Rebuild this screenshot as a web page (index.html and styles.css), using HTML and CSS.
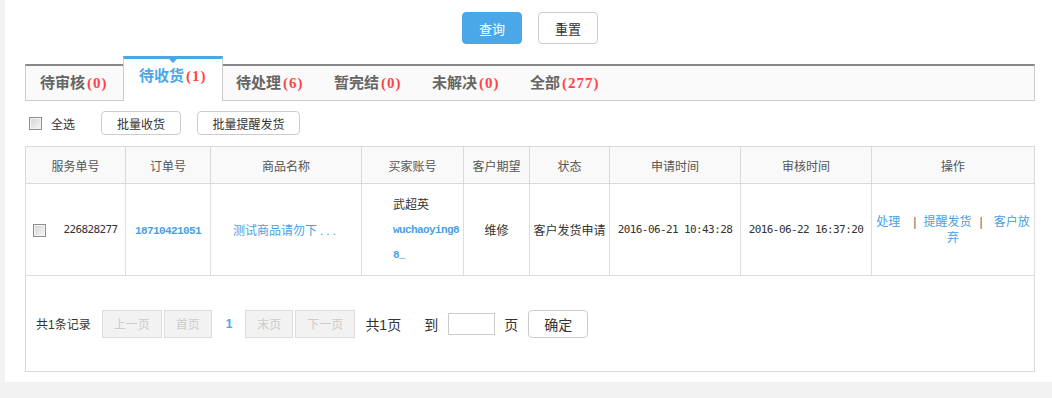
FILE: index.html
```html
<!DOCTYPE html>
<html lang="zh-CN">
<head>
    <meta charset="utf-8">
    <title>售后服务单</title>
    <link rel="stylesheet" href="styles.css">
</head>
<body>
    <div class="page">
        <div class="search-btns">
            <button class="btn btn-lg btn-primary">查询</button>
            <button class="btn btn-lg">重置</button>
        </div>

        <div class="tabs">
            <a class="tab" href="#">待审核<em>(0)</em></a>
            <a class="tab active" href="#">待收货<em>(1)</em></a>
            <a class="tab" href="#">待处理<em>(6)</em></a>
            <a class="tab" href="#">暂完结<em>(0)</em></a>
            <a class="tab" href="#">未解决<em>(0)</em></a>
            <a class="tab" href="#">全部<em>(277)</em></a>
        </div>

        <div class="toolbar">
            <label class="check-all"><input type="checkbox" class="cb">全选</label>
            <button class="btn btn-sm btn-w80">批量收货</button>
            <button class="btn btn-sm btn-w103">批量提醒发货</button>
        </div>

        <table class="list">
            <colgroup>
                <col class="c-service">
                <col class="c-order">
                <col class="c-goods">
                <col class="c-buyer">
                <col class="c-expect">
                <col class="c-state">
                <col class="c-time">
                <col class="c-time">
                <col>
            </colgroup>
            <thead>
                <tr>
                    <th>服务单号</th>
                    <th>订单号</th>
                    <th>商品名称</th>
                    <th>买家账号</th>
                    <th>客户期望</th>
                    <th>状态</th>
                    <th>申请时间</th>
                    <th>审核时间</th>
                    <th>操作</th>
                </tr>
            </thead>
            <tbody>
                <tr>
                    <td><input type="checkbox" class="cb row-cb"><span class="num">226828277</span></td>
                    <td><a class="code" href="#">18710421051</a></td>
                    <td><a class="link" href="#">测试商品请勿下<span class="dots">...</span></a></td>
                    <td class="buyer">武超英<br><a class="code" href="#">wuchaoying88_</a></td>
                    <td>维修</td>
                    <td>客户发货申请</td>
                    <td><span class="num">2016-06-21 10:43:28</span></td>
                    <td><span class="num">2016-06-22 16:37:20</span></td>
                    <td class="ops"><a class="link" href="#">处理</a><span class="sep sep-1">|</span><a class="link" href="#">提醒发货</a><span class="sep sep-2">|</span><a class="link" href="#">客户放弃</a></td>
                </tr>
            </tbody>
        </table>

        <div class="pager">
            <span class="total">共1条记录</span>
            <button class="pg-btn pg-wide">上一页</button>
            <button class="pg-btn">首页</button>
            <span class="cur">1</span>
            <button class="pg-btn">末页</button>
            <button class="pg-btn pg-wide">下一页</button>
            <span class="pages">共1页</span>
            <span class="goto">到</span>
            <input type="text" class="page-input">
            <span class="unit">页</span>
            <button class="btn btn-ok">确定</button>
        </div>
    </div>
</body>
</html>
```

FILE: styles.css
```css
body {
    margin: 0;
    background: #f2f2f2;
    font-family: "Liberation Sans", "Noto Sans CJK SC", sans-serif;
    font-size: 12px;
    color: #333;
}
a {
    text-decoration: none;
}
.page {
    margin-left: 5px;
    height: 382px;
    padding: 12px 17px 0 20px;
    box-sizing: border-box;
    background: #fff;
}

/* buttons */
.btn {
    box-sizing: border-box;
    padding: 0;
    border: 1px solid #ccc;
    border-radius: 4px;
    background: #fff;
    color: #333;
    font-family: inherit;
    cursor: pointer;
}
.btn-lg {
    width: 60px;
    height: 32px;
    font-size: 13px;
}
.btn-primary {
    border-color: #4aa8e8;
    background: #4aa8e8;
    color: #fff;
}
.btn-sm {
    height: 24px;
    font-size: 12px;
    margin-right: 16px;
}
.btn-w80 {
    width: 80px;
}
.btn-w103 {
    width: 103px;
}
.search-btns {
    display: flex;
    justify-content: center;
    gap: 16px;
}

/* tabs */
.tabs {
    display: flex;
    height: 34px;
    margin-top: 20px;
    border: 1px solid #ccc;
    border-top: 2px solid #888;
    background: #fafafa;
}
.tab {
    width: 98px;
    box-sizing: border-box;
    padding-left: 14px;
    line-height: 34px;
    font-size: 15px;
    font-weight: bold;
    color: #666;
    white-space: nowrap;
}
.tab em {
    margin-left: 2px;
    font-family: "Liberation Serif", serif;
    font-style: normal;
    letter-spacing: 1px;
    color: #f44;
}
.tab.active {
    position: relative;
    width: 100px;
    height: 45px;
    margin: -10px -1px 0;
    padding-left: 15px;
    border: 1px solid #ccc;
    border-top: 3px solid #4aa8e8;
    border-bottom: 0;
    background: #fff;
    line-height: 33px;
    color: #4aa8e8;
}
.tab.active::after {
    content: "";
    position: absolute;
    top: 0;
    left: 50%;
    margin-left: -4px;
    border: 4px solid transparent;
    border-top-color: #4aa8e8;
}

/* toolbar */
.toolbar {
    display: flex;
    align-items: center;
    height: 24px;
    margin-top: 10px;
}
.check-all {
    display: flex;
    align-items: center;
    margin: 0 26px 0 4px;
    font-size: 12px;
}
.cb {
    appearance: none;
    width: 13px;
    height: 13px;
    margin: 0 9px 0 0;
    border: 1px solid #8f8f8f;
    background: linear-gradient(135deg, #d4d4d4, #f6f6f6);
    box-shadow: inset 0 0 0 1px #f2f2f2;
    vertical-align: middle;
}

/* table */
.list {
    width: 100%;
    margin-top: 11px;
    border-collapse: collapse;
    table-layout: fixed;
}
.c-service {
    width: 100px;
}
.c-order {
    width: 85px;
}
.c-goods {
    width: 151px;
}
.c-buyer {
    width: 102px;
}
.c-expect {
    width: 66px;
}
.c-state {
    width: 80px;
}
.c-time {
    width: 131px;
}
.list th {
    height: 36px;
    padding: 0;
    border: 1px solid #d9d9d9;
    background: #f9f9f9;
    font-weight: normal;
    color: #555;
}
.list td {
    height: 91px;
    padding: 0;
    border: 1px solid #ddd;
    text-align: center;
}
.row-cb {
    margin-right: 17px;
}
.num {
    font-family: "DejaVu Sans Mono", monospace;
    font-size: 11px;
    letter-spacing: -0.6px;
    vertical-align: middle;
}
.code {
    font-family: "Liberation Mono", monospace;
    font-size: 11px;
    font-weight: bold;
    letter-spacing: -0.6px;
    color: #4a9fe3;
}
.link {
    color: #4a9fe3;
}
.dots {
    margin-left: 3px;
    letter-spacing: 3px;
}
.list td.buyer {
    padding: 0 3px 0 31px;
    text-align: left;
    line-height: 24px;
    word-break: break-all;
}
.list td.ops {
    padding: 0 1px;
    line-height: 16px;
}
.sep {
    color: #666;
}
.sep-1 {
    margin: 0 7px 0 13px;
}
.sep-2 {
    margin: 0 11px 0 8px;
}

/* pager */
.pager {
    display: flex;
    align-items: center;
    height: 95px;
    padding-left: 10px;
    border: 1px solid #d9d9d9;
    border-top: 0;
}
.total {
    margin-right: 11px;
}
.pg-btn {
    width: 48px;
    height: 28px;
    margin-right: 2px;
    padding: 0;
    border: 1px solid #ddd;
    background: #f2f2f2;
    color: #ccc;
    font-family: inherit;
    font-size: 12px;
}
.pg-wide {
    width: 60px;
}
.cur {
    margin: 0 13px 0 12px;
    font-weight: bold;
    color: #4aa8e8;
}
.pages,
.goto,
.unit {
    font-size: 14px;
}
.pages {
    margin-left: 8px;
}
.goto {
    margin-left: 23px;
}
.page-input {
    box-sizing: border-box;
    width: 47px;
    height: 22px;
    margin: 0 9px 0 10px;
    border: 1px solid #ccc;
}
.btn-ok {
    width: 60px;
    height: 28px;
    margin-left: 10px;
    font-size: 14px;
}
```
